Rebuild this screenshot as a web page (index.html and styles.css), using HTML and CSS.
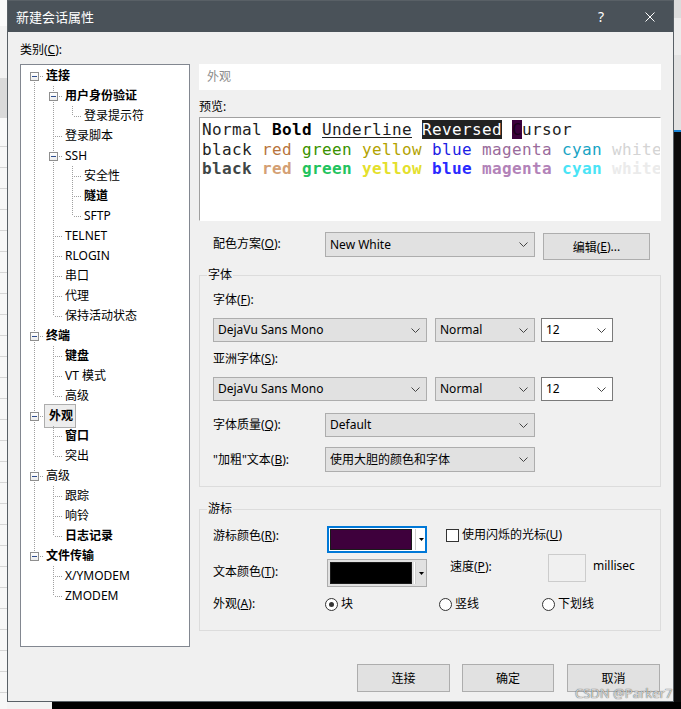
FILE: index.html
```html
<!DOCTYPE html>
<html lang="zh-CN">
<head>
<meta charset="utf-8">
<title>新建会话属性</title>
<link rel="stylesheet" href="styles.css">
</head>
<body>
<div class="desk">
  <div class="bg-left"></div>
  <div class="bg-right"></div>
  <div class="bg-bottom"></div>

  <div class="dialog">
    <div class="titlebar">
      <span class="title">新建会话属性</span>
      <span class="help">?</span>
      <span class="close"><svg width="10" height="10" viewBox="0 0 10 10"><path d="M0.5 0.5 L9.5 9.5 M9.5 0.5 L0.5 9.5" stroke="#ffffff" stroke-width="1" fill="none"/></svg></span>
    </div>

    <div class="body">
      <div class="cat-label">类别(<u>C</u>):</div>
      <div class="cols">
        <div class="tree">
          <div class="row"><span class="n first"><i class="box"></i></span><span class="t b">连接</span></div>
          <div class="row"><span class="g p"></span><span class="n"><i class="box"></i></span><span class="t b">用户身份验证</span></div>
          <div class="row"><span class="g p"></span><span class="g p"></span><span class="n last"></span><span class="t">登录提示符</span></div>
          <div class="row"><span class="g p"></span><span class="n"></span><span class="t">登录脚本</span></div>
          <div class="row"><span class="g p"></span><span class="n"><i class="box"></i></span><span class="t">SSH</span></div>
          <div class="row"><span class="g p"></span><span class="g p"></span><span class="n"></span><span class="t">安全性</span></div>
          <div class="row"><span class="g p"></span><span class="g p"></span><span class="n"></span><span class="t b">隧道</span></div>
          <div class="row"><span class="g p"></span><span class="g p"></span><span class="n last"></span><span class="t">SFTP</span></div>
          <div class="row"><span class="g p"></span><span class="n"></span><span class="t">TELNET</span></div>
          <div class="row"><span class="g p"></span><span class="n"></span><span class="t">RLOGIN</span></div>
          <div class="row"><span class="g p"></span><span class="n"></span><span class="t">串口</span></div>
          <div class="row"><span class="g p"></span><span class="n"></span><span class="t">代理</span></div>
          <div class="row"><span class="g p"></span><span class="n last"></span><span class="t">保持活动状态</span></div>
          <div class="row"><span class="n"><i class="box"></i></span><span class="t b">终端</span></div>
          <div class="row"><span class="g p"></span><span class="n"></span><span class="t b">键盘</span></div>
          <div class="row"><span class="g p"></span><span class="n"></span><span class="t">VT 模式</span></div>
          <div class="row"><span class="g p"></span><span class="n last"></span><span class="t">高级</span></div>
          <div class="row"><span class="n"><i class="box"></i></span><span class="t b sel">外观</span></div>
          <div class="row"><span class="g p"></span><span class="n"></span><span class="t b">窗口</span></div>
          <div class="row"><span class="g p"></span><span class="n last"></span><span class="t">突出</span></div>
          <div class="row"><span class="n"><i class="box"></i></span><span class="t">高级</span></div>
          <div class="row"><span class="g p"></span><span class="n"></span><span class="t">跟踪</span></div>
          <div class="row"><span class="g p"></span><span class="n"></span><span class="t">响铃</span></div>
          <div class="row"><span class="g p"></span><span class="n last"></span><span class="t b">日志记录</span></div>
          <div class="row"><span class="n last"><i class="box"></i></span><span class="t b">文件传输</span></div>
          <div class="row"><span class="g"></span><span class="n"></span><span class="t">X/YMODEM</span></div>
          <div class="row"><span class="g"></span><span class="n last"></span><span class="t">ZMODEM</span></div>
        </div>

        <div class="panel">
          <div class="page-title">外观</div>
          <div class="preview-lbl">预览:</div>
          <div class="preview">
            <div class="pl">Normal <b>Bold</b> <span class="ul">Underline</span> <span class="rev">Reversed</span> <span class="cur">C</span>ursor</div>
            <div class="pl l2"><span class="k0">black</span> <span class="k1">red</span> <span class="k2">green</span> <span class="k3">yellow</span> <span class="k4">blue</span> <span class="k5">magenta</span> <span class="k6">cyan</span> <span class="k7">white</span></div>
            <div class="pl bold"><span class="h0">black</span> <span class="h1">red</span> <span class="h2">green</span> <span class="h3">yellow</span> <span class="h4">blue</span> <span class="h5">magenta</span> <span class="h6">cyan</span> <span class="h7">white</span></div>
          </div>

          <div class="srow">
            <span class="lbl w112 mt5">配色方案(<u>O</u>):</span>
            <div class="sel w210 h25"><span class="txt">New White</span><svg class="chev" width="9" height="5" viewBox="0 0 9 5"><polyline points="0.5,0.5 4.5,4.5 8.5,0.5" fill="none" stroke="#444" stroke-width="1"/></svg></div>
            <div class="btn edit">编辑(<u>E</u>)...</div>
          </div>

          <div class="group font-group">
            <div class="legend">字体</div>
            <div class="flbl first">字体(<u>F</u>):</div>
            <div class="selrow">
              <div class="sel w214"><span class="txt">DejaVu Sans Mono</span><svg class="chev" width="9" height="5" viewBox="0 0 9 5"><polyline points="0.5,0.5 4.5,4.5 8.5,0.5" fill="none" stroke="#444" stroke-width="1"/></svg></div>
              <div class="sel w100 ml8"><span class="txt">Normal</span><svg class="chev" width="9" height="5" viewBox="0 0 9 5"><polyline points="0.5,0.5 4.5,4.5 8.5,0.5" fill="none" stroke="#444" stroke-width="1"/></svg></div>
              <div class="sel combo w72 ml6"><span class="txt">12</span><svg class="chev" width="9" height="5" viewBox="0 0 9 5"><polyline points="0.5,0.5 4.5,4.5 8.5,0.5" fill="none" stroke="#444" stroke-width="1"/></svg></div>
            </div>
            <div class="flbl">亚洲字体(<u>S</u>):</div>
            <div class="selrow">
              <div class="sel w214"><span class="txt">DejaVu Sans Mono</span><svg class="chev" width="9" height="5" viewBox="0 0 9 5"><polyline points="0.5,0.5 4.5,4.5 8.5,0.5" fill="none" stroke="#444" stroke-width="1"/></svg></div>
              <div class="sel w100 ml8"><span class="txt">Normal</span><svg class="chev" width="9" height="5" viewBox="0 0 9 5"><polyline points="0.5,0.5 4.5,4.5 8.5,0.5" fill="none" stroke="#444" stroke-width="1"/></svg></div>
              <div class="sel combo w72 ml6"><span class="txt">12</span><svg class="chev" width="9" height="5" viewBox="0 0 9 5"><polyline points="0.5,0.5 4.5,4.5 8.5,0.5" fill="none" stroke="#444" stroke-width="1"/></svg></div>
            </div>
            <div class="frow q">
              <span class="lbl w112">字体质量(<u>Q</u>):</span>
              <div class="sel w210"><span class="txt">Default</span><svg class="chev" width="9" height="5" viewBox="0 0 9 5"><polyline points="0.5,0.5 4.5,4.5 8.5,0.5" fill="none" stroke="#444" stroke-width="1"/></svg></div>
            </div>
            <div class="frow bd">
              <span class="lbl w112">"加粗"文本(<u>B</u>):</span>
              <div class="sel w210 h25"><span class="txt">使用大胆的颜色和字体</span><svg class="chev" width="9" height="5" viewBox="0 0 9 5"><polyline points="0.5,0.5 4.5,4.5 8.5,0.5" fill="none" stroke="#444" stroke-width="1"/></svg></div>
            </div>
          </div>

          <div class="group cursor-group">
            <div class="legend">游标</div>
            <div class="crow r1">
              <span class="lbl w114 mt3">游标颜色(<u>R</u>):</span>
              <div class="cbtn focus">
                <span class="swatch purple"></span><span class="divider"></span>
                <svg class="tri" width="5" height="3" viewBox="0 0 5 3"><polygon points="0,0 5,0 2.5,3" fill="#000"/></svg>
              </div>
              <div class="check-item"><span class="checkbox"></span><span>使用闪烁的光标(<u>U</u>)</span></div>
            </div>
            <div class="crow r2">
              <span class="lbl w114 mt11">文本颜色(<u>T</u>):</span>
              <div class="cbtn plain">
                <span class="swatch black"></span><span class="divider"></span>
                <svg class="tri" width="5" height="3" viewBox="0 0 5 3"><polygon points="0,0 5,0 2.5,3" fill="#000"/></svg>
              </div>
              <span class="lbl speed">速度(<u>P</u>):</span>
              <span class="speed-input"></span>
              <span class="lbl ms">millisec</span>
            </div>
            <div class="crow r3">
              <span class="lbl w112">外观(<u>A</u>):</span>
              <span class="radio-item ri1"><span class="radio on"></span>块</span>
              <span class="radio-item ri2"><span class="radio"></span>竖线</span>
              <span class="radio-item"><span class="radio"></span>下划线</span>
            </div>
          </div>
        </div>
      </div>

      <div class="buttons">
        <div class="btn bb w93">连接</div>
        <div class="btn bb w92 ml12">确定</div>
        <div class="btn bb w93 ml13">取消</div>
      </div>
    </div>
  </div>

  <div class="watermark">CSDN @Parker7</div>
</div>
</body>
</html>
```

FILE: styles.css
```css
* { box-sizing: border-box; }
html, body { margin: 0; padding: 0; }
body {
  width: 681px;
  height: 709px;
  overflow: hidden;
  font-family: "Noto Sans", "Noto Sans CJK SC", sans-serif;
  font-size: 12px;
  color: #000;
  background: #f3f3f3;
}
u { text-decoration: underline; text-underline-offset: 1px; }

.desk { position: relative; width: 681px; height: 709px; }

.bg-left {
  position: absolute; left: 0; top: 0; width: 7px; height: 709px;
  background:
    linear-gradient(to bottom, #fafafa 0 26px, #f2f2f2 26px 78px, #dadada 78px 118px, #fafafa 118px 140px, transparent 140px),
    repeating-linear-gradient(to bottom, #f7f7f7 0 20px, #d6d6d6 20px 21px);
}
.bg-right {
  position: absolute; left: 674px; top: 0; width: 7px; height: 709px;
  background: linear-gradient(to bottom, #dcdcdc 0 18px, #ececec 18px 55px, #e2e2e2 55px 130px, #1a86d8 130px 132px, #0b0b0b 132px);
}
.bg-bottom { position: absolute; left: 52px; top: 702px; width: 629px; height: 7px; background: #000; }

.dialog {
  position: absolute; left: 7px; top: 0;
  width: 667px; height: 702px;
  border: 1px solid #596066;
  background: #f0f0f0;
  display: flex; flex-direction: column;
}

.titlebar {
  height: 31px; flex: none;
  background: #4a5259;
  display: flex; align-items: center;
  color: #fff;
}
.title { flex: 1; padding-left: 8px; font-family: "Noto Sans CJK SC", sans-serif; font-size: 13px; line-height: 31px; }
.help { width: 46px; margin-right: 3px; text-align: center; font-size: 14px; line-height: 31px; }
.close { width: 46px; height: 31px; display: flex; align-items: center; justify-content: center; }

.body { flex: 1; padding: 11px 12px 0 12px; }
.cat-label { line-height: 14px; margin-bottom: 7px; }
.cols { display: flex; gap: 9px; }

/* tree */
.tree {
  width: 170px; height: 583px; flex: none;
  border: 1px solid #828790;
  background: #fff;
  padding: 1px 0 0 4px;
  overflow: hidden;
}
.row { display: flex; align-items: center; height: 20px; }
.g, .n { width: 19px; height: 20px; flex: none; position: relative; }
.g.p::before, .n::before {
  content: ""; position: absolute; left: 9px; top: 0; bottom: 0; width: 1px;
  background: repeating-linear-gradient(to bottom, #a0a0a0 0 1px, transparent 1px 2px);
}
.n.first::before { top: 10px; }
.n.last::before { bottom: 10px; }
.n::after {
  content: ""; position: absolute; left: 10px; right: 0; top: 10px; height: 1px;
  background: repeating-linear-gradient(to right, transparent 0 1px, #a0a0a0 1px 2px);
}
.box {
  position: absolute; left: 5px; top: 6px; width: 9px; height: 9px; z-index: 1;
  border: 1px solid #8f8f8f;
  background: linear-gradient(to bottom, #ffffff, #ececec);
}
.box::after {
  content: ""; position: absolute; left: 1px; top: 3px; width: 5px; height: 1px; background: #2f4f8f;
}
.t { height: 18px; line-height: 18px; padding: 0 2px; white-space: nowrap; }
.t.b { font-weight: 700; }
.t.sel { background: #ededed; }

/* panel */
.panel { width: 462px; flex: none; }
.page-title { height: 26px; background: #fff; color: #8c8c8c; padding-left: 8px; line-height: 26px; }
.preview-lbl { margin-top: 10px; line-height: 14px; }
.preview {
  margin-top: 3px;
  height: 104px;
  background: #fff;
  border-style: solid; border-width: 1px;
  border-color: #a0a0a0 #ffffff #ffffff #a0a0a0;
  padding: 2px 0 0 2px;
  overflow: hidden;
  font-family: "DejaVu Sans Mono", monospace;
  font-size: 16px;
  line-height: 19px;
  letter-spacing: 0.367px;
  color: #1e1e1e;
}
.pl { height: 19px; white-space: pre; }
.pl.l2 { height: 20px; padding-top: 1px; }
.pl b { font-weight: 700; color: #000; }
.pl.bold { font-weight: 700; }
.ul { text-decoration: underline; text-underline-offset: 2px; }
.rev { display: inline-block; height: 19px; background: #222; color: #fff; }
.cur { display: inline-block; height: 19px; background: #3c003c; color: #1a001a; }
.k0 { color: #222; } .k1 { color: #b8743c; } .k2 { color: #3a9200; } .k3 { color: #b3a300; }
.k4 { color: #1e1ee4; } .k5 { color: #9a6b9c; } .k6 { color: #18a4c4; } .k7 { color: #d4d4d4; }
.h0 { color: #3f4646; } .h1 { color: #d4a074; } .h2 { color: #22c35e; } .h3 { color: #e4e02c; }
.h4 { color: #2a2aff; } .h5 { color: #b282b8; } .h6 { color: #4ae4f6; } .h7 { color: #ebebeb; }

.lbl { line-height: 14px; white-space: nowrap; flex: none; }
.w112 { width: 112px; }
.w114 { width: 114px; }
.mt3 { margin-top: 3px; }
.mt5 { margin-top: 5px; }
.mt11 { margin-top: 11px; }

.srow { display: flex; align-items: flex-start; margin-top: 11px; padding-left: 14px; height: 28px; }

.sel {
  height: 24px; flex: none;
  border: 1px solid #adadad;
  background: #e1e1e1;
  display: flex; align-items: center;
  padding-left: 4px;
}
.sel .txt { flex: 1; white-space: nowrap; overflow: hidden; line-height: 16px; }
.sel .chev { flex: none; margin-right: 6px; }
.sel.combo { background: #fff; border-color: #7a7a7a; }
.h25 { height: 25px; }
.w210 { width: 210px; }
.w214 { width: 214px; }
.w100 { width: 100px; }
.w72 { width: 72px; }
.ml8 { margin-left: 8px; }
.ml6 { margin-left: 6px; }

.btn {
  border: 1px solid #adadad;
  background: #e1e1e1;
  display: flex; align-items: center; justify-content: center;
  white-space: nowrap;
  flex: none;
}
.edit { width: 107px; height: 27px; margin-left: 8px; margin-top: 1px; }

.group { border: 1px solid #dcdcdc; padding: 0 0 0 13px; }
.legend {
  display: table;
  margin: -8px 0 0 -6px;
  padding: 0 1px;
  background: #f0f0f0;
  line-height: 14px;
}
.font-group { margin-top: 15px; padding-bottom: 14px; }
.flbl { line-height: 14px; margin-top: 10px; }
.flbl.first { margin-top: 11px; }
.selrow { display: flex; margin-top: 11px; }
.frow { display: flex; align-items: center; }
.frow.q { margin-top: 12px; }
.frow.bd { margin-top: 10px; }

.cursor-group { margin-top: 22px; padding-bottom: 19px; }
.crow { display: flex; align-items: flex-start; }
.crow.r1 { margin-top: 10px; height: 27px; }
.crow.r2 { margin-top: 1px; height: 33px; }
.crow.r3 { margin-top: 10px; height: 14px; align-items: center; }

.cbtn { width: 100px; display: flex; align-items: center; flex: none; }
.cbtn.focus { height: 27px; border: 2px solid #0078d7; background: #fff; padding: 1px 0 1px 1px; }
.cbtn.plain { height: 28px; margin-top: 5px; border: 1px solid #adadad; background: #e1e1e1; padding: 2px 0 2px 2px; }
.swatch { width: 82px; height: 100%; border: 1px solid #1a1a1a; flex: none; }
.swatch.purple { background: #3e003c; }
.swatch.black { background: #000; }
.divider { width: 1px; height: 100%; background: #fff; margin-left: 2px; box-shadow: 1px 0 0 #cfcfcf; flex: none; }
.tri { margin-left: 4px; flex: none; }

.check-item { display: flex; align-items: center; margin-left: 19px; margin-top: 2px; line-height: 14px; white-space: nowrap; }
.checkbox { width: 13px; height: 13px; border: 1px solid #333; background: #fff; margin-right: 3px; flex: none; }

.speed { margin-left: 23px; width: 98px; margin-top: 6px; }
.speed-input { width: 38px; height: 28px; border: 1px solid #cccccc; background: #f0f0f0; flex: none; }
.ms { margin-left: 7px; margin-top: 5px; }

.radio-item { display: flex; align-items: center; line-height: 14px; white-space: nowrap; flex: none; }
.ri1 { width: 114px; }
.ri2 { width: 103px; }
.radio {
  width: 13px; height: 13px; border: 1px solid #333; border-radius: 50%;
  background: #fff; margin-right: 3px; position: relative; flex: none;
}
.radio.on::after {
  content: ""; position: absolute; left: 3px; top: 3px; width: 5px; height: 5px; border-radius: 50%; background: #333;
}

.buttons { display: flex; justify-content: flex-end; margin-top: 17px; padding-right: 1px; }
.bb { height: 28px; }
.w93 { width: 93px; }
.w92 { width: 92px; }
.ml12 { margin-left: 12px; }
.ml13 { margin-left: 13px; }

.watermark {
  position: absolute; left: 575px; top: 685px;
  font-family: "Noto Sans", sans-serif;
  font-size: 13px; line-height: 17px;
  color: rgba(235, 235, 235, 0.85);
  text-shadow: 0 0 1px rgba(0, 0, 0, 0.55), 0 0 1px rgba(0, 0, 0, 0.4);
  white-space: nowrap;
}
```
